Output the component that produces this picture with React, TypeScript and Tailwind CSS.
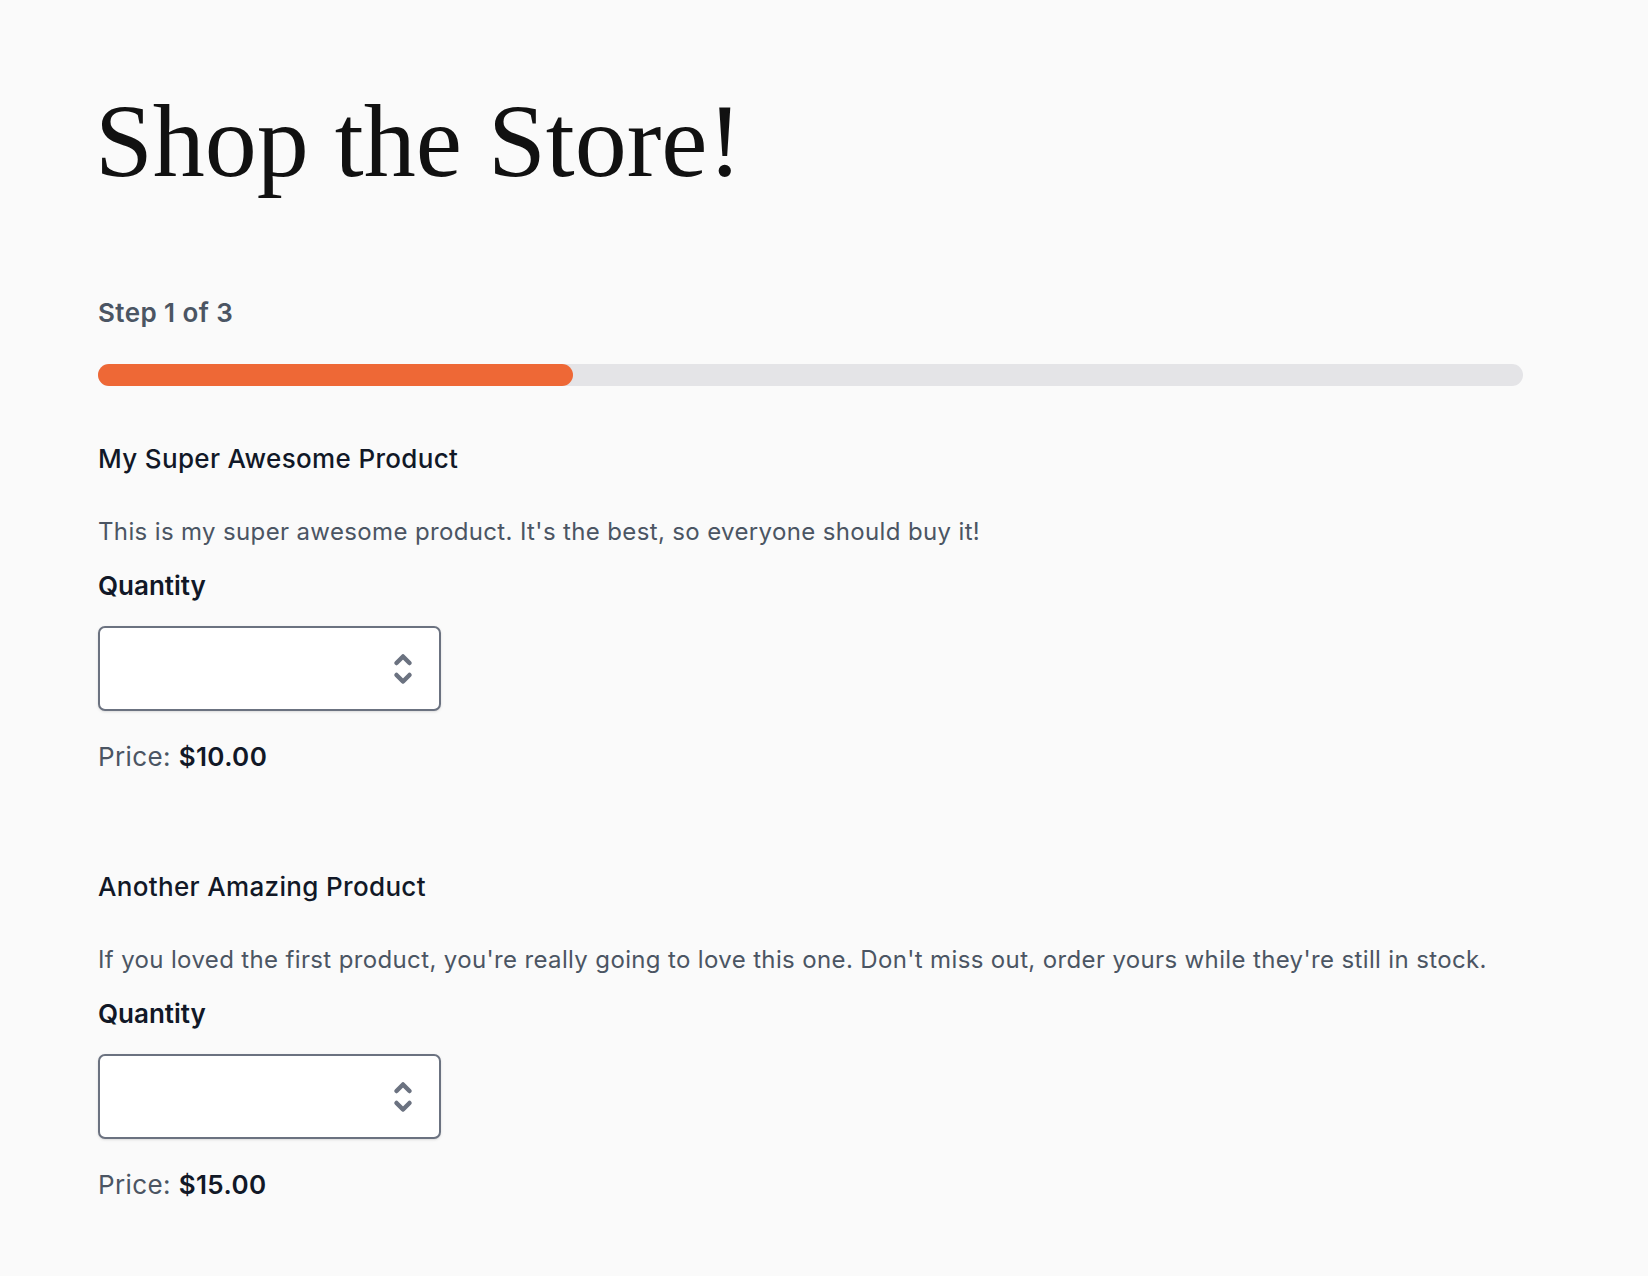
const products = [
  {
    id: "super-awesome",
    name: "My Super Awesome Product",
    description: "This is my super awesome product. It's the best, so everyone should buy it!",
    price: "$10.00",
  },
  {
    id: "another-amazing",
    name: "Another Amazing Product",
    description:
      "If you loved the first product, you're really going to love this one. Don't miss out, order yours while they're still in stock.",
    price: "$15.00",
  },
]

function ChevronUpDown() {
  return (
    <svg width="20" height="32" viewBox="0 0 20 32" fill="none" stroke="#6b7280" strokeWidth="4.5" strokeLinecap="round" strokeLinejoin="round">
      <path d="M3.5 10 L10 3.5 L16.5 10" />
      <path d="M3.5 22 L10 28.5 L16.5 22" />
    </svg>
  )
}

export default function App() {
  const step = 1
  const total = 3

  return (
    <div className="min-h-screen bg-[#fafafa] px-[98px] pb-16 pt-[89px] font-['Inter','Noto_Sans',sans-serif] text-[24px] leading-[36px]">
      {/* Heading */}
      <h1 className="-ml-[3px] font-['Liberation_Serif',serif] text-[104px] leading-none font-normal text-[#111111]">
        Shop the Store!
      </h1>

      {/* Progress */}
      <p className="mt-[102px] text-[26px] font-semibold tracking-[0.016em] text-[#4b5563]">
        Step {step} of {total}
      </p>
      <div className="mt-[33px] h-[22px] w-[1425px] rounded-full bg-[#e4e4e7]">
        <div className="h-full rounded-full bg-[#ee6836]" style={{ width: `${(step / total) * 100}%` }} />
      </div>

      {/* Products */}
      <div className="mt-[55px] flex flex-col gap-[94px]">
        {products.map((product) => (
          <div key={product.id}>
            <h3 className="text-[26px] font-medium tracking-[0.013em] text-[#111827]">{product.name}</h3>
            <p className="mt-[37px] tracking-[0.015em] text-[#4b5563]">{product.description}</p>
            <label htmlFor={product.id} className="mt-[18px] block text-[26px] font-semibold text-[#111827]">
              Quantity
            </label>
            <div className="relative mt-[22px] w-[343px]">
              <select
                id={product.id}
                className="block h-[85px] w-full appearance-none rounded-[7px] border-2 border-[#6b7280] bg-white shadow-sm"
              />
              <div className="pointer-events-none absolute inset-y-0 right-[28px] flex items-center">
                <ChevronUpDown />
              </div>
            </div>
            <p className="mt-[28px] text-[26px] tracking-[0.015em] text-[#4b5563]">
              Price: <span className="font-semibold text-[#111827]">{product.price}</span>
            </p>
          </div>
        ))}
      </div>
    </div>
  )
}
